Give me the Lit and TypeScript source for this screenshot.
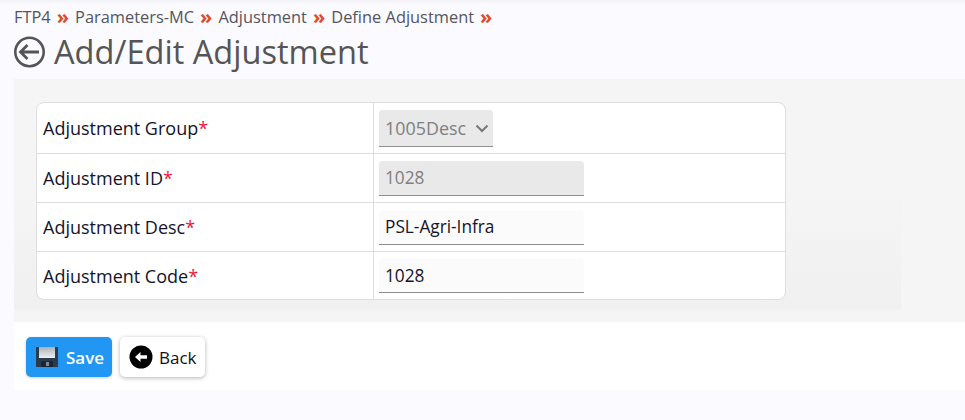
import { LitElement, html, css } from "lit";
import { customElement } from "lit/decorators.js";

const rows = [
  { label: "Adjustment Group", kind: "select", value: "1005Desc" },
  { label: "Adjustment ID", kind: "disabled", value: "1028" },
  { label: "Adjustment Desc", kind: "input", value: "PSL-Agri-Infra" },
  { label: "Adjustment Code", kind: "input", value: "1028" },
];

@customElement("app-root")
export class AppRoot extends LitElement {
  static styles = css`
    :host {
      display: block;
      width: 965px;
      height: 420px;
      overflow: hidden;
      background: #fafaff;
      font-family: "Open Sans", "Liberation Sans", sans-serif;
      box-sizing: border-box;
    }
    .page { padding: 0 0 0 14px; }
    .crumbs {
      display: flex;
      align-items: center;
      height: 34px;
      font-size: 16.4px;
      line-height: 34px;
      color: #555560;
      white-space: nowrap;
    }
    .sep { color: #e0492a; font-weight: 700; margin: 0 6px 0 6px; font-size: 20px; line-height: 30px; }
    .title {
      display: flex;
      align-items: center;
      gap: 8px;
      box-sizing: border-box;
      height: 45px;
      padding-bottom: 9px;
      margin: 0;
      font-size: 32.6px;
      font-weight: 400;
      line-height: 36px;
      color: #555;
    }
    .title svg { display: block; flex: none; }
    .panel { background: #f5f5f5; height: 243px; }
    .inner {
      box-sizing: border-box;
      width: 887px;
      height: 231px;
      padding: 23px 115px 0 22px;
      background: linear-gradient(to bottom, #f5f5f5 47%, #f0f0f0 100%);
    }
    .table {
      box-sizing: border-box;
      width: 750px;
      height: 198px;
      background: #fff;
      border: 1px solid #dedede;
      border-radius: 8px;
      display: grid;
      grid-template-columns: 337px 1fr;
      grid-template-rows: 51px 49px 49px 1fr;
      overflow: hidden;
    }
    .cell { display: flex; align-items: center; border-bottom: 1px solid #dedede; box-sizing: border-box; }
    .cell.last { border-bottom: none; }
    .label { padding-left: 6px; border-right: 1px solid #dedede; font-size: 18px; color: #14142b; }
    .req { color: #f0143c; }
    .val { padding-left: 5px; }
    .field {
      box-sizing: border-box;
      height: 35px;
      width: 205px;
      padding: 0 6px;
      display: flex;
      align-items: center;
      font-size: 17.25px;
      color: #14142b;
      background: #fbfbfb;
      border-bottom: 1px solid #8f8f8f;
      border-radius: 4px 4px 0 0;
    }
    .field.off { background: #e9e9e9; color: #808080; }
    .field.sel { width: 114px; height: 37px; justify-content: space-between; padding-right: 4px; font-size: 17.9px; }
    .foot {
      box-sizing: border-box;
      height: 68px;
      background: #fff;
      display: flex;
      align-items: center;
      gap: 8px;
      padding: 2px 0 0 12px;
    }
    .btn {
      box-sizing: border-box;
      height: 40px;
      border: none;
      border-radius: 5px;
      display: flex;
      align-items: center;
      font-family: inherit;
      font-size: 17px;
      font-weight: 400;
      padding: 0;
    }
    .save {
      width: 86px;
      background: #2196f3;
      color: #fff;
      font-weight: 600;
      gap: 7px;
      padding-left: 9px;
      box-shadow: 0 1px 3px rgba(0,0,0,.2);
    }
    .back {
      width: 85px;
      background: #fff;
      color: #111;
      gap: 6px;
      padding-left: 9px;
      box-shadow: 0 1px 4px rgba(0,0,0,.3);
    }
    .btn svg { display: block; flex: none; }
    .topshade { height: 4px; margin-bottom: -4px; background: linear-gradient(to bottom, #f3f3f6, #fafaff); }
  `;

  renderField(r: { kind: string; value: string }) {
    if (r.kind === "select") {
      return html`<div class="field off sel"><span>${r.value}</span>
        <svg width="14" height="14" viewBox="0 0 14 14"><path d="M1.5 4.5L7 10l5.5-5.5" fill="none" stroke="#777" stroke-width="2"/></svg></div>`;
    }
    return html`<div class="field ${r.kind === "disabled" ? "off" : ""}">${r.value}</div>`;
  }

  render() {
    return html`
      <div class="topshade"></div>
      <div class="page">
        <div class="crumbs">
          FTP4<span class="sep">»</span>Parameters-MC<span class="sep">»</span>Adjustment<span class="sep">»</span>Define Adjustment<span class="sep">»</span>
        </div>
        <h1 class="title">
          <svg width="32" height="32" viewBox="0 0 32 32">
            <circle cx="15.5" cy="16" r="14.2" fill="none" stroke="#555" stroke-width="2.6"/>
            <path d="M6 16h19M13.5 9l-7 7 7 7" fill="none" stroke="#555" stroke-width="2.8"/>
          </svg>
          Add/Edit Adjustment
        </h1>
        <div class="panel">
          <div class="inner">
            <div class="table">
              ${rows.map((r, i) => {
                const last = i === rows.length - 1 ? "last" : "";
                return html`
                  <div class="cell label ${last}"><span>${r.label}<span class="req">*</span></span></div>
                  <div class="cell val ${last}">${this.renderField(r)}</div>`;
              })}
            </div>
          </div>
        </div>
        <div class="foot">
          <button class="btn save">
            <svg width="24" height="22" viewBox="0 0 24 22">
              <defs>
                <linearGradient id="fl" x1="0" y1="0" x2="0" y2="1">
                  <stop offset="0" stop-color="#a9b0b8"/>
                  <stop offset="1" stop-color="#eef0f2"/>
                </linearGradient>
              </defs>
              <path d="M1 1h22v20H1z" fill="#2b3a4d"/>
              <rect x="4" y="1" width="16" height="11" fill="url(#fl)"/>
              <rect x="6" y="15" width="12" height="6" fill="#1c2633"/>
              <rect x="11" y="16" width="3" height="4" fill="#7d8a99"/>
            </svg>
            Save
          </button>
          <button class="btn back">
            <svg width="24" height="24" viewBox="0 0 24 24">
              <circle cx="12" cy="12" r="11.5" fill="#000"/>
              <path d="M6 12l5.5-5v3.2H18v3.6h-6.5V17z" fill="#fff"/>
            </svg>
            Back
          </button>
        </div>
      </div>
    `;
  }
}
